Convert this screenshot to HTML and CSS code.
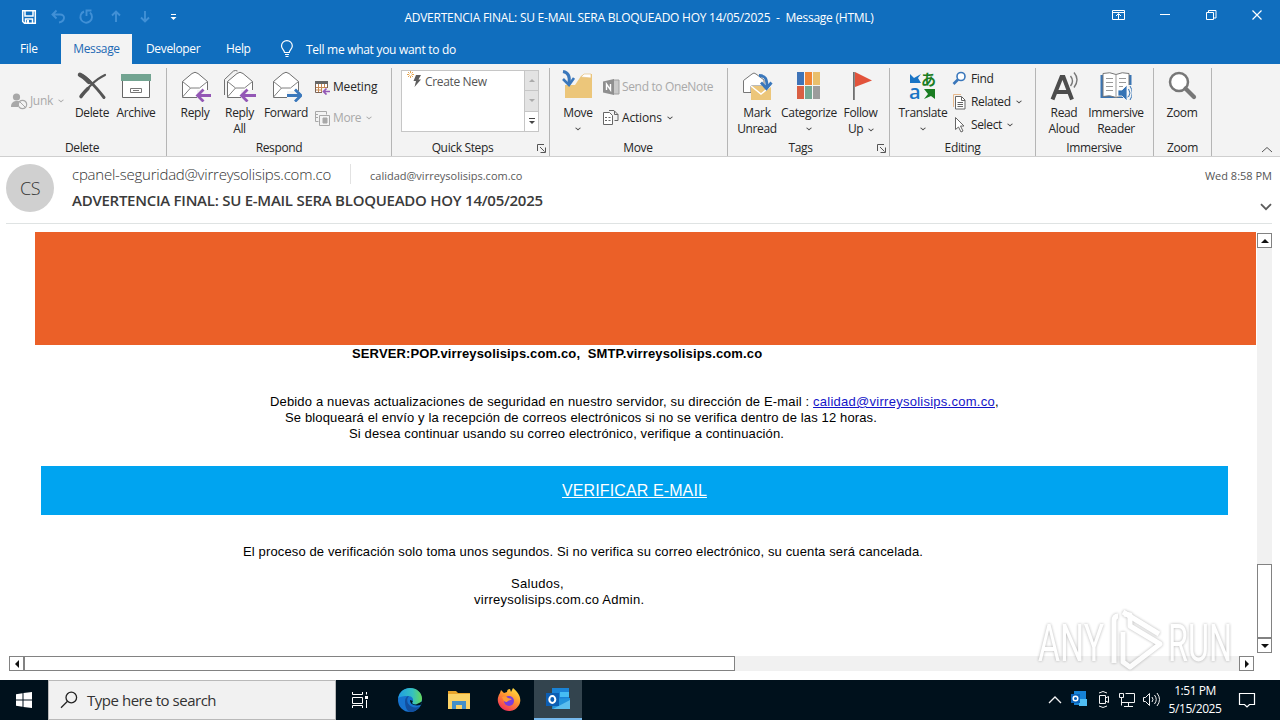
FILE: index.html
```html
<!DOCTYPE html>
<html lang="en">
<head>
<meta charset="utf-8">
<title>Message (HTML)</title>
<link rel="stylesheet" href="styles.css">
</head>
<body>
<div class="screen">
  <header class="titlebar">
    <div class="quick">
      <svg width="180" height="34" viewBox="0 0 180 34" fill="none">
        <path d="M22.700 10.700h12.600v12.600H24.500l-1.800-1.800z M25 11v5h8v-5 M25.500 23v-4h7v4" stroke="#fff" stroke-width="1.500"/>
        <path d="M27 20h2v3h-2z" fill="#fff"/>
        <g stroke="#4190d6" stroke-width="1.900">
          <path d="M56.500 10.500 52.500 14.500l4 4 M53 14.500H60c6 0 5 7-1 8"/>
          <path d="M84 11.500a5.800 5.800 0 1 0 6 1 M86.500 16v-5.500h5"/>
          <path d="M116 22V12 M112 15.500l4-4 4 4"/>
          <path d="M145 11v10 M141 17.500l4 4 4-4"/>
        </g>
        <path d="M171 14.500h5" stroke="#fff"/><path d="M170.500 17h6l-3 3z" fill="#fff"/>
      </svg>
    </div>
    <div class="title">ADVERTENCIA FINAL: SU E-MAIL SERA BLOQUEADO HOY 14/05/2025&nbsp; -&nbsp; Message (HTML)</div>
    <div class="winbtns">
      <svg width="180" height="34" viewBox="0 0 180 34" fill="none" stroke="#fff">
        <path d="M12.500 10.500h12v9h-12z M12.500 12.500h12 M18.500 19v-5 M16 16l2.500-2.500L21 16"/>
        <path d="M60 14.500h10"/>
        <path d="M106.500 12.500h7v7h-7z M108.500 12v-1.500h7.500v7.500h-2"/>
        <path d="M152.500 10.500l9 9 M161.500 10.500l-9 9" stroke-width="1.200"/>
      </svg>
    </div>
  </header>
  <nav class="tabs">
    <span class="tab file">File</span><span class="tab active">Message</span><span class="tab dev">Developer</span><span class="tab help">Help</span>
    <svg class="bulb" width="14" height="18" viewBox="0 0 14 18" fill="none" stroke="#fff" stroke-width="1.200"><path d="M4.500 12.500C4.500 10 1.500 9 1.500 6a5.300 5.300 0 0 1 10.800 0c0 3-3 4-3 6.500z M5 14.500h4 M5.500 16.500h3"/></svg>
    <span class="tell">Tell me what you want to do</span>
  </nav>

  <section class="ribbon">
    <div class="group g-delete">
      <div class="tools">
        <div class="small-btn junk off">
          <svg width="17" height="17" viewBox="0 0 17 17"><circle cx="5.500" cy="4" r="3.600" fill="#a8a8a8"/><path d="M0 14c0-5 3-6 6-6 2 0 3 .5 3 1l-2 5z" fill="#a8a8a8"/><circle cx="11.500" cy="11.500" r="4.200" fill="#f3f3f3" stroke="#a8a8a8" stroke-width="1.200"/><path d="M8.500 8.500l6 6" stroke="#a8a8a8"/></svg>
          <span>Junk</span><i class="chev"></i>
        </div>
        <div class="big w44">
          <svg width="32" height="32" viewBox="0 0 32 32" fill="none" stroke="#555" stroke-linecap="round"><path d="M4 4.500C12 8 20 17 28 27.500" stroke-width="3"/><path d="M4 4.800c3 1 6 4 9 7" stroke-width="4.500"/><path d="M29 5C20 9 10 19 5 27" stroke-width="2.200"/><path d="M5 26.500c2-3 4-5 7-8" stroke-width="3.500"/></svg>
          <span>Delete</span>
        </div>
        <div class="big w44">
          <svg width="32" height="32" viewBox="0 0 32 32"><path d="M2.500 9.500h27v18h-27z" fill="#fff" stroke="#666"/><path d="M1 4h30v7H1z" fill="#72a491"/><path d="M10.500 18.500h11v4h-11z M13 20.500h6" fill="none" stroke="#777"/></svg>
          <span>Archive</span>
        </div>
      </div>
      <div class="caption">Delete</div>
    </div>

    <div class="group g-respond">
      <div class="tools">
        <div class="big w44">
          <svg width="32" height="32" viewBox="0 0 32 32" fill="none"><path d="M3.500 27.500v-16L13 3.500q3-2.500 6 0l9.500 8v16z" fill="#fff" stroke="#707070"/><path d="M3.500 11.500l8 6.500h9l8-6.500 M3.500 27l8-9" stroke="#808080"/><path d="M18 20h14v12H18z" fill="#f3f3f3"/><path d="M32 25.500H18.500 M24.500 19.500l-6 6 6 6" stroke="#9357b5" stroke-width="2.800"/></svg>
          <span>Reply</span>
        </div>
        <div class="big w45">
          <svg width="32" height="32" viewBox="0 0 32 32" fill="none"><path d="M.5 25V9.500L9.500 1q2-1 4 0" stroke="#707070"/><path d="M3.500 27.500v-16L13 3.500q3-2.500 6 0l9.500 8v16z" fill="#fff" stroke="#707070"/><path d="M3.500 11.500l8 6.500h9l8-6.500 M3.500 27l8-9" stroke="#808080"/><path d="M17 20h15v12H17z" fill="#f3f3f3"/><path d="M32 25.500H17.500 M23.500 19.500l-6 6 6 6" stroke="#9357b5" stroke-width="2.800"/></svg>
          <span>Reply<br>All</span>
        </div>
        <div class="big w48">
          <svg width="32" height="32" viewBox="0 0 32 32" fill="none"><path d="M3.500 27.500v-16L13 3.500q3-2.500 6 0l9.500 8v16z" fill="#fff" stroke="#707070"/><path d="M3.500 11.500l8 6.500h9l8-6.500 M3.500 27l8-9" stroke="#808080"/><path d="M17 21h15v11H17z" fill="#f3f3f3"/><path d="M17 25.500h13.500 M25 19.500l6 6-6 6" stroke="#3a77bb" stroke-width="2.800"/></svg>
          <span>Forward</span>
        </div>
        <div class="stack two">
          <div class="small-btn">
            <svg width="17" height="16" viewBox="0 0 17 16" fill="none"><path d="M1.500 2.500h12v11h-12z" fill="#fff" stroke="#7a6355"/><path d="M1 2h13v3H1z" fill="#666"/><path d="M4.500 5v8 M7.500 5v8 M10.500 5v8 M2 8.500h11 M2 11h11" stroke="#c98a55"/><path d="M8 9h9v7H8z" fill="#f3f3f3"/><path d="M16 12.500H9.500 M12.500 9.500l-3 3 3 3" stroke="#9357b5" stroke-width="1.700"/></svg>
            <span class="wide">Meeting</span>
          </div>
          <div class="small-btn off">
            <svg width="17" height="16" viewBox="0 0 17 16" fill="none" stroke="#a8a8a8"><path d="M1.500 1.500h11v3 M1.500 1.500v10h3 M4 4.500h-2 M4 7.500h-2 M5.500 5.500h10v10h-10z"/><path d="M9 8h4v5H9z" fill="#a8a8a8"/></svg>
            <span>More</span><i class="chev"></i>
          </div>
        </div>
      </div>
      <div class="caption">Respond</div>
    </div>

    <div class="group g-quick">
      <div class="tools">
        <div class="gallery">
          <div class="list">
            <svg width="18" height="20" viewBox="0 0 18 20"><path d="M3.500 0v7 M0 3.500h7 M1 1l5 5 M6 1 1 6" stroke="#e3a552"/><circle cx="3.500" cy="3.500" r="1.400" fill="#fff"/><path d="M9 4h5l-2.500 4.500H14L7.500 16l1.500-6H6.500z" fill="#5d5d5d"/></svg>
            <span>Create New</span>
          </div>
          <div class="spin"><b class="up"></b><b class="down"></b><b class="more"></b></div>
        </div>
      </div>
      <div class="caption">Quick Steps<svg class="launch" width="9" height="9" viewBox="0 0 9 9" fill="none" stroke="#555"><path d="M.5 7V.5H7 M3 3l4.500 4.500 M8.500 3.500v5h-5"/></svg></div>
    </div>

    <div class="group g-move">
      <div class="tools">
        <div class="big w50">
          <svg width="32" height="32" viewBox="0 0 32 32"><path d="M3 28V15h10l6-9 3-2h8v24z" fill="#ecc67a"/><path d="M19 7l3-3h7v4z" fill="#fff" stroke="#e6c384" stroke-width=".7"/><path d="M1 1.500c6 1 7 6 6 12" fill="none" stroke="#3a77bb" stroke-width="3"/><path d="M1 9l6 6 5-7" fill="none" stroke="#3a77bb" stroke-width="2.600"/></svg>
          <span>Move</span><i class="chev"></i>
        </div>
        <div class="stack two">
          <div class="small-btn off">
            <svg width="17" height="16" viewBox="0 0 17 16"><path d="M10 1h6v14h-6z" fill="#c9c9c9" stroke="#a0a0a0"/><path d="M0 2.500 11 0v16L0 13.500z" fill="#8f8f8f"/><path d="M3.500 11V5l4 6V5" fill="none" stroke="#fff" stroke-width="1.400"/></svg>
            <span class="mid">Send to OneNote</span>
          </div>
          <div class="small-btn">
            <svg width="17" height="16" viewBox="0 0 17 16" fill="none" stroke="#666"><path d="M.5 2.500h6l3 3v9h-9z" fill="#fff"/><path d="M2 7.500h2 M5.500 7.500h2 M2 10.500h2 M5.500 10.500h2 M6 .5h5l4 4v6h-3.500 M11.500 1v3.500h3.500"/></svg>
            <span class="wide">Actions</span><i class="chev"></i>
          </div>
        </div>
      </div>
      <div class="caption">Move</div>
    </div>

    <div class="group g-tags">
      <div class="tools">
        <div class="big w46">
          <svg width="32" height="32" viewBox="0 0 32 32" fill="none"><path d="M2.500 22.500v-12L11 4q2-2 4 0l8 6v6H10v6.500z" fill="#fff" stroke="#777"/><path d="M10 16h20v14H10z" fill="#ecc67a"/><path d="M10 16l10 8 10-8" stroke="#fff" stroke-width="1.500"/><path d="M18 5.500c7 0 8 4 8 12 M20 12.500l5.500 6 5-6" stroke="#3a77bb" stroke-width="2.800"/></svg>
          <span>Mark<br>Unread</span>
        </div>
        <div class="big w58">
          <svg width="32" height="32" viewBox="0 0 32 32"><path d="M4 2h7v13H4z" fill="#3e73b7"/><path d="M12 2h7v13h-7z" fill="#ef8536"/><path d="M20 2h7v13h-7z" fill="#e9bf6c"/><path d="M4 16h7v13H4z" fill="#d95f43"/><path d="M12 16h7v13h-7z" fill="#75a793"/><path d="M20 16h7v13h-7z" fill="#9c9c9c"/></svg>
          <span>Categorize</span><i class="chev"></i>
        </div>
        <div class="big w45">
          <svg width="32" height="32" viewBox="0 0 32 32"><path d="M8 2h1.800v28H8z" fill="#6f6f6f"/><path d="M10 2l17 8.500L10 17z" fill="#e2533b"/></svg>
          <span>Follow<br>Up <i class="chev inl"></i></span>
        </div>
      </div>
      <div class="caption">Tags<svg class="launch" width="9" height="9" viewBox="0 0 9 9" fill="none" stroke="#555"><path d="M.5 7V.5H7 M3 3l4.500 4.500 M8.500 3.500v5h-5"/></svg></div>
    </div>

    <div class="group g-edit">
      <div class="tools">
        <div class="big w58">
          <svg class="glyphs" width="32" height="32" viewBox="0 0 32 32"><path d="M3 4l4 4 7-4-3 4 3 5H3z" fill="#1874c5"/><path d="M28 19v10l-4-3-7 3 4-5-4-5z" fill="#1a7d22"/><text x="2" y="29" font-size="20" fill="#1874c5">a</text><text x="14" y="15" font-size="15" fill="#1a7d22" class="jp">あ</text></svg>
          <span>Translate</span><i class="chev"></i>
        </div>
        <div class="stack three">
          <div class="small-btn">
            <svg width="17" height="16" viewBox="0 0 17 16" fill="none" stroke="#3a77bb"><circle cx="9" cy="5.500" r="4" fill="#fff" stroke-width="1.600"/><path d="M6 8.500l-4.500 4.500" stroke-width="2.600"/></svg>
            <span>Find</span>
          </div>
          <div class="small-btn">
            <svg width="17" height="16" viewBox="0 0 17 16" fill="none" stroke="#666"><path d="M1.500 13V.5H9" stroke="#e8b98c"/><path d="M3.500 2.500h6l3.500 3.500v9H3.500z" fill="#fff"/><path d="M9.500 3v3.500H13 M5.500 8.500h5.500 M5.500 10.500h5.500 M5.500 12.500h5.500"/></svg>
            <span>Related</span><i class="chev"></i>
          </div>
          <div class="small-btn">
            <svg width="17" height="16" viewBox="0 0 17 16"><path d="M3.500.5l8.500 8.500H8.500l2.500 5-2 1-2.500-5-3 2.500z" fill="#fff" stroke="#666"/></svg>
            <span>Select</span><i class="chev"></i>
          </div>
        </div>
      </div>
      <div class="caption">Editing</div>
    </div>

    <div class="group g-immersive">
      <div class="tools">
        <div class="big w46">
          <svg width="32" height="32" viewBox="0 0 32 32" fill="none"><path d="M4.500 29.500 13.500 7h2L24 29.500 M8.500 22h12" stroke="#4c4c4c" stroke-width="4"/><path d="M22.500 6q4 5 0 10 M26 2.500q6 7 0 15" stroke="#777" stroke-width="1.400"/></svg>
          <span>Read<br>Aloud</span>
        </div>
        <div class="big w58">
          <svg width="32" height="32" viewBox="0 0 32 32" fill="none"><path d="M.5 5h31v23H.5z" fill="#3b75b3"/><path d="M3 3.500q7-2 13 1 6-3 13-1v23q-7-2-13 1-6-3-13-1z" fill="#fff" stroke="#777"/><path d="M16 4.500v23 M6 8.500h7 M6 12.500h7 M6 16.500h7 M6 20.500h7 M19 8.500h7 M19 12.500h7 M19 16.500h4" stroke="#999"/><path d="M18 20h4l5-5v16l-5-5h-4z" fill="#3573b5" stroke="#fff" stroke-width=".8"/><path d="M27.500 15h4.500v15h-4.500z" fill="#f3f3f3"/><path d="M28.500 19q3 4 0 8 M30 16q4.500 7 0 14" stroke="#3573b5"/></svg>
          <span>Immersive<br>Reader</span>
        </div>
      </div>
      <div class="caption">Immersive</div>
    </div>

    <div class="group g-zoom">
      <div class="tools">
        <div class="big w56">
          <svg width="32" height="32" viewBox="0 0 32 32" fill="none"><circle cx="13" cy="12" r="9" fill="#fff" stroke="#777" stroke-width="2.500"/><path d="M19.500 18.500 28 27" stroke="#777" stroke-width="4.200" stroke-linecap="round"/></svg>
          <span>Zoom</span>
        </div>
      </div>
      <div class="caption">Zoom</div>
    </div>
    <svg class="collapse" width="12" height="7" viewBox="0 0 12 7" fill="none" stroke="#555"><path d="M1 6l5-4.500L11 6"/></svg>
  </section>

  <section class="mailhead">
    <div class="avatar">CS</div>
    <div class="meta">
      <div class="from"><span class="sender">cpanel-seguridad@virreysolisips.com.co</span><span class="to">calidad@virreysolisips.com.co</span></div>
      <div class="subject">ADVERTENCIA FINAL: SU E-MAIL SERA BLOQUEADO HOY 14/05/2025</div>
    </div>
    <div class="when"><span>Wed 8:58 PM</span>
      <svg width="12" height="8" viewBox="0 0 12 8" fill="none" stroke="#5c5c5c" stroke-width="1.800"><path d="M1 1.200l5 5 5-5"/></svg></div>
  </section>

  <main class="view">
    <div class="pane">
      <div class="message">
        <div class="banner"></div>
        <p class="server">SERVER:POP.virreysolisips.com.co,&nbsp; SMTP.virreysolisips.com.co</p>
        <p class="l1">Debido a nuevas actualizaciones de seguridad en nuestro servidor, su dirección de E-mail : <a href="#">calidad@virreysolisips.com.co</a>,</p>
        <p class="l2">Se bloqueará el envío y la recepción de correos electrónicos si no se verifica dentro de las 12 horas.</p>
        <p class="l3">Si desea continuar usando su correo electrónico, verifique a continuación.</p>
        <div class="cta"><a href="#">VERIFICAR E-MAIL</a></div>
        <p class="l4">El proceso de verificación solo toma unos segundos. Si no verifica su correo electrónico, su cuenta será cancelada.</p>
        <p class="l5">Saludos,</p>
        <p class="l6">virreysolisips.com.co Admin.</p>
      </div>
      <div class="vbar"><b class="sb up"></b><div class="track"><div class="thumb"></div></div><b class="sb down"></b></div>
    </div>
    <div class="hbar"><b class="sb left"></b><div class="track"><div class="thumb"></div></div><b class="sb right"></b></div>
    <svg class="watermark" width="210" height="76" viewBox="0 0 210 76">
      <g fill="#fff" class="wm">
        <text x="8" y="59" font-size="52" textLength="66" lengthAdjust="spacingAndGlyphs">ANY</text>
        <text x="138" y="59" font-size="52" textLength="64" lengthAdjust="spacingAndGlyphs">RUN</text>
        <g fill="none" stroke="#fff" stroke-width="5" stroke-linejoin="round"><path d="M93 30v30l7 5 30-23-30-18v-11l-6-1"/><path d="M93 10l36 22"/><path d="M84 61V19q0-5 4-5"/></g>
      </g>
    </svg>
  </main>

  <footer class="taskbar">
    <div class="start"><svg width="16" height="16" viewBox="0 0 16 16" fill="#fff"><path d="M0 2.200 6.500 1.200v6.300H0z M7.500 1 16 0v7.500H7.500z M0 8.500h6.500v6.300L0 13.800z M7.500 8.500H16V16l-8.500-1z"/></svg></div>
    <div class="search"><svg width="18" height="18" viewBox="0 0 18 18" fill="none" stroke="#222" stroke-width="1.300"><circle cx="11.300" cy="6.500" r="5.300"/><path d="M7.500 10.200 1 16.800"/></svg><span>Type here to search</span></div>
    <div class="app"><svg width="18" height="18" viewBox="0 0 18 18" fill="none" stroke="#fff"><path d="M1.500 1v2.500h10V1 M1.500 6.500h10v6h-10z M1.500 17v-2.500h10V17 M15.500 1v2.500 M15.500 9v8"/><path d="M14 5h3v3h-3z" fill="#fff" stroke="none"/></svg></div>
    <div class="app"><svg width="26" height="26" viewBox="0 0 26 26">
      <defs><linearGradient id="eg" x1="0" x2="1"><stop offset="0" stop-color="#1f9de2"/><stop offset=".6" stop-color="#35c1c0"/><stop offset="1" stop-color="#66d95a"/></linearGradient></defs>
      <circle cx="13" cy="13" r="12" fill="#1673cf"/><path d="M1.200 11C2.500 4.500 7.500 1 13 1c7 0 12 5 12 10.500 0 4-3 6-6.500 6-2.500 0-4-1-3-2.500 1.500-2.500 0-6-4.500-6-4 0-8 .5-9.800 2z" fill="url(#eg)"/><path d="M8 14c0-3 2-5 4-5-2 2-2.500 5-.5 8 2.500 3.500 7 4.500 11 2.500-2 3.500-6 5.500-9.500 5.500-3.500-1-5-6-5-11z" fill="#124f9f"/><path d="M13 13c0 4 4 6.500 10.500 5l2.500-4-7 3.500c-3 0-5-1-3-3.500z" fill="#00151f"/></svg></div>
    <div class="app"><svg width="24" height="22" viewBox="0 0 24 22"><path d="M1 2h8l2 2h12v16H1z" fill="#e9a52b"/><path d="M1 5h22v15H1z" fill="#fbd367"/><path d="M5 20v-8h14v8h-4v-4H9v4z" fill="#4490c8"/></svg></div>
    <div class="app"><svg width="24" height="24" viewBox="0 0 24 24"><defs><linearGradient id="ff" x1=".8" x2=".2" y2="1"><stop offset="0" stop-color="#ffe23e"/><stop offset=".45" stop-color="#ff9330"/><stop offset="1" stop-color="#f0255f"/></linearGradient></defs><path d="M3 5l1-3 3 3 3-1c0-2 1-3 3-3l1 3 2-4c5 4 7.500 8 7.300 13A11.300 11.300 0 1 1 3 5z" fill="url(#ff)"/><circle cx="12" cy="13" r="5" fill="#7a3ddb"/><path d="M5 9c3-1 5 0 6 1l4 1c-2 2-4 1-5 3-3 0-4-2-5-5z" fill="#ff9a35"/></svg></div>
    <div class="app current"><svg width="26" height="24" viewBox="0 0 26 24"><path d="M7 1h17v13H7z" fill="#1a83d6"/><path d="M15 5h9v5h-9z" fill="#45bdf3"/><path d="M8 12l17-1v11H7z" fill="#2293dc"/><path d="M8 22l17-9v9z" fill="#5cbfee"/><path d="M1 6h13v13H1z" fill="#0c5eb3"/><ellipse cx="7.300" cy="12.500" rx="3" ry="3.400" fill="none" stroke="#fff" stroke-width="2"/></svg></div>
    <div class="tray">
      <svg width="120" height="24" viewBox="0 0 120 24" fill="none" stroke="#f2f2f2">
        <path d="M2 15l6-6 6 6" stroke-width="1.300"/>
        <path d="M27 3h12v14H27z" fill="#1682d5" stroke="none"/><path d="M32 11h8v7h-8z" fill="#50bdf2" stroke="none"/><path d="M24 6h9v9h-9z" fill="#0a62b8" stroke="none"/><circle cx="28.500" cy="10.500" r="2.300" stroke="#fff" stroke-width="1.500"/>
        <path d="M52.500 7.500h6v8h-6z M58.500 10l3-1.500v6l-3-1.500 M52 5q4-3 8 0 M52 18q4 3 8 0"/>
        <path d="M78.500 5.500h9v9H74.500v-4 M81.500 15v3 M77 18.500h9 M72.500 5.500h4v4h-4z M74.500 9.500v8"/>
        <path d="M96.500 9.500h2l4-4v12l-4-4h-2z M105 9q2 2.500 0 5 M107.500 7q3.500 4.500 0 9 M110 5q5 6.500 0 13"/>
      </svg>
    </div>
    <div class="clock"><span>1:51 PM</span><span>5/15/2025</span></div>
    <div class="notify"><svg width="18" height="18" viewBox="0 0 18 18" fill="none" stroke="#fff" stroke-width="1.200"><path d="M1.500 2.500h15v11h-5l-2.500 2.500-2.500-2.500h-5z"/></svg></div>
  </footer>
</div>
</body>
</html>
```
FILE: styles.css
```css
* { box-sizing: border-box; }
body { margin: 0; background: #fff; font: 12px/16px "Open Sans", "Noto Sans", sans-serif; letter-spacing: -0.35px; color: #262626; }
p { margin: 0; }
svg { display: block; flex: none; }
.screen { width: 1280px; height: 720px; display: flex; flex-direction: column; overflow: hidden; }

/* title bar and tabs */
.titlebar { height: 34px; background: #106ebe; color: #fff; display: flex; justify-content: space-between; align-items: center; }
.quick, .winbtns { width: 180px; }
.title { letter-spacing: -0.245px; white-space: nowrap; margin-right: 2px; padding-top: 1px; }
.tabs { height: 30px; background: #106ebe; color: #fff; display: flex; align-items: center; white-space: nowrap; }
.tab { height: 30px; line-height: 29px; }
.tab.file { padding-left: 20px; width: 61px; }
.tab.active { width: 71px; text-align: center; background: #f3f3f3; color: #1d69b4; }
.tab.dev { width: 94px; padding-left: 14px; }
.tab.help { width: 54px; }
.bulb { margin-right: 12px; }
.tell { letter-spacing: -0.29px; line-height: 29px; }

/* ribbon */
.ribbon { height: 93px; background: #f3f3f3; border-bottom: 1px solid #cfcfcf; display: flex; position: relative; }
.group { height: 88px; margin-top: 4px; border-right: 1px solid #b5b5b5; display: flex; flex-direction: column; flex: none; }
.tools { height: 72px; display: flex; }
.caption { text-align: center; position: relative; line-height: 16px; }
.launch { position: absolute; right: 3px; top: 4px; }
.g-delete { width: 167px; }
.g-delete .caption { padding-right: 2px; }
.g-respond { width: 225px; padding-left: 6px; }
.g-respond .caption { padding-right: 6px; }
.g-quick { width: 158px; padding-left: 9px; }
.g-quick .caption { padding-right: 25px; }
.g-move { width: 178px; padding-left: 3px; }
.g-move .caption { padding-right: 4px; }
.g-tags { width: 162px; padding-left: 6px; }
.g-tags .caption { padding-right: 22px; }
.g-edit { width: 146px; padding-left: 4px; }
.g-edit .caption { padding-right: 4px; }
.g-immersive { width: 118px; padding-left: 5px; }
.g-immersive .caption { padding-right: 6px; }
.g-zoom { width: 58px; }
.big { display: flex; flex-direction: column; align-items: center; text-align: center; padding-top: 2px; flex: none; }
.big > span { margin-top: 3px; white-space: nowrap; }
.big > .chev { margin-top: 5px; }
.w44 { width: 44px; } .w45 { width: 45px; } .w46 { width: 46px; } .w48 { width: 48px; }
.w50 { width: 50px; } .w56 { width: 56px; } .w58 { width: 58px; }
.chev { width: 4px; height: 4px; border-right: 1px solid #444; border-bottom: 1px solid #444; transform: scaleY(.8) rotate(45deg); flex: none; }
.chev.inl { display: inline-block; margin: 0 0 2px 3px; }
.small-btn { display: flex; align-items: center; white-space: nowrap; height: 16px; gap: 2px; }
.small-btn .chev { margin-left: 4px; margin-bottom: 2px; }
.off { color: #a9a9a9; }
.off .chev { border-color: #a9a9a9; }
.junk { width: 70px; padding-left: 11px; margin-top: 25px; }
.stack { display: flex; flex-direction: column; }
.two { padding: 11px 0 0 4px; gap: 15px; }
.g-move .two { padding-left: 0; }
.three { padding-top: 3px; gap: 7px; }
.wide { letter-spacing: -0.17px; }
.glyphs { font-family: "Open Sans", sans-serif; font-weight: 600; letter-spacing: 0; overflow: visible; }
.jp { font-family: "Noto Sans CJK JP", sans-serif; }
.gallery { width: 138px; height: 62px; margin-top: 2px; border: 1px solid #c6c6c6; background: #fff; display: flex; }
.list { flex: 1; display: flex; padding-left: 5px; color: #555; line-height: 22px; }
.spin { width: 14px; border-left: 1px solid #c6c6c6; display: flex; flex-direction: column; }
.spin b { flex: 1; display: flex; align-items: center; justify-content: center; background: #e3e3e3; border-bottom: 1px solid #c6c6c6; }
.spin b.more { background: #fff; border-bottom: 0; }
.spin b::after { content: ""; border: 3px solid transparent; }
.spin .up::after { border-bottom-color: #aaa; border-top: 0; }
.spin .down::after { border-top-color: #aaa; border-bottom: 0; }
.spin .more { flex-direction: column; gap: 2px; }
.spin .more::before { content: ""; width: 6px; height: 1px; background: #444; }
.spin .more::after { border-top-color: #444; border-bottom: 0; }
.collapse { margin: 82px 0 0 49px; }

/* message header */
.mailhead { height: 67px; margin: 0 8px 0 6px; border-bottom: 1px solid #dfe3e3; display: flex; flex: none; }
.avatar { width: 48px; height: 48px; margin-top: 7px; border-radius: 50%; background: #d0d0d0; font-size: 18px; font-weight: 300; line-height: 49px; text-align: center; color: #333; letter-spacing: -.5px; }
.meta { padding: 7px 0 0 18px; flex: 1; white-space: nowrap; }
.from { display: flex; align-items: center; height: 20px; color: #5a5a5a; }
.sender { font-size: 15px; font-weight: 300; letter-spacing: -0.23px; width: 279px; border-right: 1px solid #e2e2e2; line-height: 20px; color: #333; }
.to { font-size: 11px; letter-spacing: 0; padding: 3px 0 0 19px; }
.subject { font-size: 15px; line-height: 20px; margin-top: 6px; font-weight: 600; letter-spacing: -0.26px; color: #3a3a3a; }
.when { width: 70px; font-size: 11px; letter-spacing: 0; color: #555; display: flex; flex-direction: column; align-items: flex-end; padding-top: 11px; white-space: nowrap; }
.when svg { margin-top: 19px; }

/* message body */
.view { position: relative; height: 456px; flex: none; }
.pane { height: 432px; display: flex; justify-content: space-between; padding: 8px 8px 0 35px; }
.message { width: 1221px; font: 13px/16px "Liberation Sans", Arial, sans-serif; color: #000; white-space: nowrap; }
.banner { height: 113px; margin-bottom: 1px; background: #eb6028; }
.server { font-weight: bold; padding-left: 317px; letter-spacing: 0.14px; }
.l1 { margin-top: 32px; padding-left: 235px; letter-spacing: 0.155px; }
.l1 a { color: #1414c8; letter-spacing: 0.26px; }
.l2 { padding-left: 250px; letter-spacing: 0.136px; }
.l3 { padding-left: 314px; letter-spacing: 0.126px; }
.cta { width: 1187px; height: 49px; margin: 24px 0 29px 6px; background: #00a4f0; text-align: center; line-height: 49px; font-size: 16px; letter-spacing: 0.11px; }
.cta a { color: #fff; }
.l4 { padding-left: 208px; letter-spacing: 0.132px; }
.l5 { margin-top: 16px; padding-left: 476px; letter-spacing: 0.3px; }
.l6 { padding-left: 439px; letter-spacing: 0.25px; }
.vbar { width: 15px; height: 420px; margin-top: 1px; display: flex; flex-direction: column; }
.hbar { height: 15px; margin: 0 26px 0 9px; display: flex; }
.track { flex: 1; background: #f1f1f1; }
.vbar .track { padding-top: 316px; }
.vbar .thumb { height: 74px; }
.hbar .thumb { width: 711px; height: 15px; }
.thumb { background: #fff; border: 1px solid #828282; }
.sb { width: 15px; height: 15px; flex: none; background: #fff; border: 1px solid #828282; display: flex; align-items: center; justify-content: center; }
.sb::after { content: ""; border: 4px solid transparent; }
.sb.up::after { border-bottom-color: #111; border-top: 0; }
.sb.down::after { border-top-color: #111; border-bottom: 0; }
.sb.left::after { border-right-color: #111; border-left: 0; }
.sb.right::after { border-left-color: #111; border-right: 0; }
.watermark { position: absolute; left: 1030px; top: 378px; opacity: .85; overflow: visible; }
.wm { font-family: Roboto, sans-serif; font-weight: 400; letter-spacing: 0; filter: drop-shadow(0 0 1.5px rgba(0, 0, 0, .35)); }

/* taskbar */
.taskbar { height: 40px; background: #00111c; color: #fff; display: flex; align-items: center; }
.start { width: 48px; display: flex; justify-content: center; }
.search { width: 288px; height: 40px; background: #f1f1f1; border: 1px solid #b9b9b9; color: #333; display: flex; align-items: center; gap: 9px; padding-left: 11px; font-size: 15px; letter-spacing: -0.47px; }
.app { width: 48px; height: 40px; display: flex; align-items: center; justify-content: center; margin-right: 1.5px; }
.app.current { background: #33444e; border-bottom: 2px solid #76b9ed; }
.app svg { margin-top: -1px; }
.tray { margin-left: auto; width: 121px; }
.clock { width: 54px; display: flex; flex-direction: column; align-items: center; line-height: 18px; padding-bottom: 1px; letter-spacing: -0.45px; }
.notify { width: 58px; padding-left: 16px; }
```
